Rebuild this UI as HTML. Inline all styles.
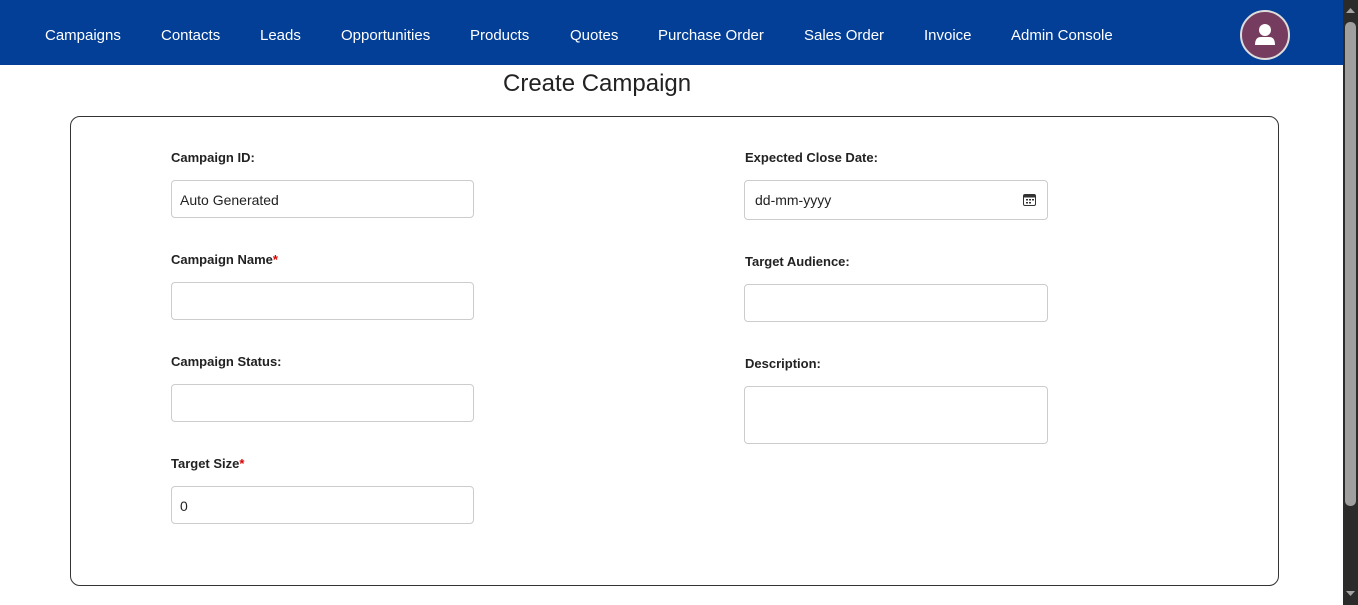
<!DOCTYPE html>
<html><head><style>
*{box-sizing:border-box;margin:0;padding:0}
body{width:1358px;height:605px;overflow:hidden;background:#fff;font-family:"Liberation Sans",Arial,sans-serif;position:relative}
.nav{position:absolute;left:0;top:0;width:1343px;height:65px;background:#033f96}
.nav span{position:absolute;top:27px;color:#fff;font-size:15px}
.av{position:absolute;left:1240px;top:10px;width:50px;height:50px;border-radius:50%;background:#763c5f;border:2px solid #ddd}
.sb{position:absolute;left:1343px;top:0;width:15px;height:605px;background:#2b2b2b}
.th{position:absolute;left:2px;top:22px;width:11px;height:484px;background:#9f9f9f;border-radius:5px}
h1{position:absolute;left:503px;top:70px;font-size:24px;font-weight:normal;color:#222}
.card{position:absolute;left:70px;top:116px;width:1209px;height:470px;border:1px solid #333;border-radius:10px}
.l{position:absolute;font-size:13px;font-weight:bold;color:#222}
.l i{color:#d00;font-style:normal}
.in{position:absolute;width:303px;height:38px;border:1px solid #ccc;border-radius:4px;font-size:14px;color:#222;padding:11px 8px}
</style></head><body>
<div class="nav">
<span style="left:45px">Campaigns</span><span style="left:161px">Contacts</span><span style="left:260px">Leads</span><span style="left:341px">Opportunities</span><span style="left:470px">Products</span><span style="left:570px">Quotes</span><span style="left:658px">Purchase Order</span><span style="left:804px">Sales Order</span><span style="left:924px">Invoice</span><span style="left:1011px">Admin Console</span>
<div class="av"><svg width="46" height="46" viewBox="0 0 46 46"><circle cx="23" cy="18" r="6" fill="#fff"/><path d="M13 33 Q13 25 19 25 H27 Q33 25 33 33 Z" fill="#fff"/></svg></div>
</div>
<div class="sb"><svg style="position:absolute;left:3px;top:8px" width="9" height="6"><path d="M0 5 L4.5 0 L9 5Z" fill="#a3a3a3"/></svg><div class="th"></div><svg style="position:absolute;left:3px;top:591px" width="9" height="6"><path d="M0 0 L4.5 5 L9 0Z" fill="#a3a3a3"/></svg></div>
<h1>Create Campaign</h1>
<div class="card"></div>
<div class="l" style="left:171px;top:150px">Campaign ID:</div>
<div class="in" style="left:171px;top:180px">Auto Generated</div>
<div class="l" style="left:171px;top:252px">Campaign Name<i>*</i></div>
<div class="in" style="left:171px;top:282px"></div>
<div class="l" style="left:171px;top:354px">Campaign Status:</div>
<div class="in" style="left:171px;top:384px"></div>
<div class="l" style="left:171px;top:456px">Target Size<i>*</i></div>
<div class="in" style="left:171px;top:486px">0</div>
<div class="l" style="left:745px;top:150px">Expected Close Date:</div>
<div class="in" style="left:744px;top:180px;width:304px;height:40px;padding-left:10px">dd-mm-yyyy
<svg style="position:absolute;right:11px;top:13px" width="13" height="12" viewBox="0 0 13 12"><rect x="0.5" y="0.5" width="12" height="11" rx="1.5" fill="none" stroke="#333"/><rect x="0.5" y="0.5" width="12" height="3" fill="#333"/><rect x="3" y="5" width="2" height="1.5" fill="#333"/><rect x="6" y="5" width="2" height="1.5" fill="#333"/><rect x="9" y="5" width="2" height="1.5" fill="#333"/><rect x="3" y="8" width="2" height="1.5" fill="#333"/><rect x="6" y="8" width="2" height="1.5" fill="#333"/></svg></div>
<div class="l" style="left:745px;top:254px">Target Audience:</div>
<div class="in" style="left:744px;top:284px;width:304px"></div>
<div class="l" style="left:745px;top:356px">Description:</div>
<div class="in" style="left:744px;top:386px;width:304px;height:58px"></div>
</body></html>
